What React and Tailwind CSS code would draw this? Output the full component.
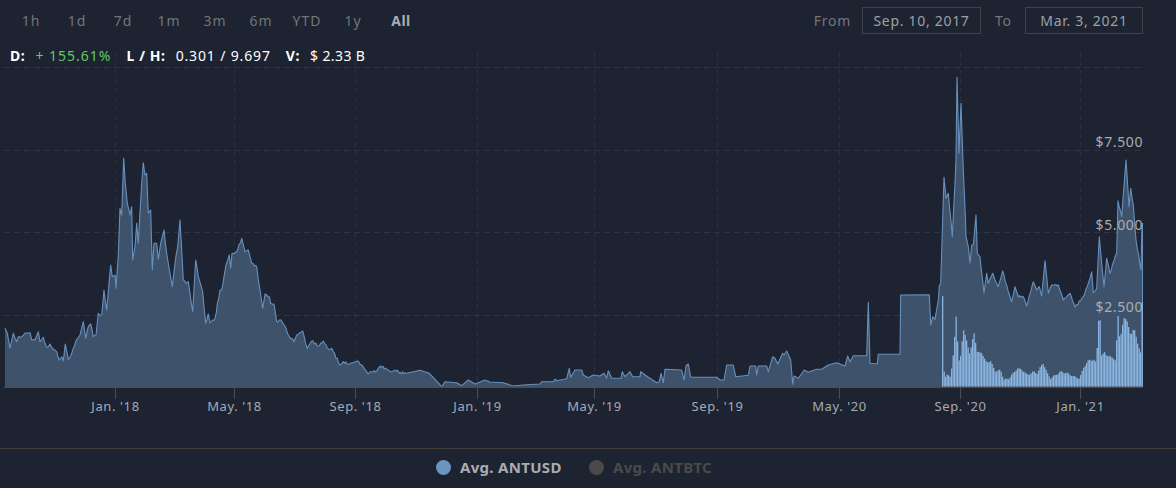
const font = { fontFamily: '"Noto Sans", sans-serif' };

const ranges = ['1h', '1d', '7d', '1m', '3m', '6m', 'YTD', '1y', 'All'];

const ticks = [
  [115, "Jan. '18"],
  [234, "May. '18"],
  [355, "Sep. '18"],
  [477, "Jan. '19"],
  [594, "May. '19"],
  [717, "Sep. '19"],
  [839, "May. '20"],
  [960, "Sep. '20"],
  [1080, "Jan. '21"],
];

// traced from crops of the chart, 3x scale, each with its own origin
const left = [15,565,22,580,30,625,40,580,50,605,55,590,65,590,75,580,90,578,95,600,105,600,115,575,120,605,130,592,140,622,150,612,160,628,170,635,178,660,185,650,190,662,196,612,205,658,215,640,230,598,240,585,250,545,257,595,263,565,272,552,280,590,288,585,295,520,305,525,312,450,320,510,332,375,337,410,345,405,348,445,355,345,360,205,365,225,371,55,376,130,382,190,390,225,395,200,398,360,405,320,410,250,415,310,425,130,430,68,435,105,440,100,445,220,452,210,457,390,462,310,470,310,475,358,482,310,492,270,500,340,510,400,517,440,525,370,533,320,540,240,550,420,558,430,565,425,570,460,578,515,587,360,595,410,608,455,617,550,625,522,630,548,645,535,660,450,665,450,678,375,688,345,692,385,696,340,710,335,725,295,735,335,745,330,755,370,770,380,780,450,788,505,795,462,808,470,812,490,822,492,830,545,843,540,858,565,868,590,882,605,890,585,908,573,922,625,935,603,955,618,970,603,985,627,995,625,1020,675,1030,665,1045,672,1075,663,1085,675,1105,702,1115,695,1130,693,1140,678,1165,690,1175,695,1185,690,1200,697];
const middle = [0,245,20,250,60,241,88,250,105,268,125,290,135,275,170,278,185,287,205,270,225,282,255,270,270,276,310,278,340,288,370,285,420,282,425,275,460,275,465,267,470,272,500,266,508,235,512,262,525,240,545,240,550,255,565,263,580,255,600,258,612,250,620,264,625,242,635,265,663,265,667,245,675,260,690,245,698,260,720,260,722,245,745,262,770,278,778,275,783,250,790,278,795,238,845,240,852,270,858,228,865,222,872,262,950,262,960,270,972,270,980,225,1000,225,1007,260,1045,256,1050,228,1067,228,1070,255,1075,228,1100,228,1105,245,1118,200,1125,205,1133,222,1148,190,1152,195,1160,183,1172,210,1178,283,1182,258,1195,265,1213,240,1225,247,1250,238,1265,238,1285,225,1310,218,1335,228,1343,198,1350,215,1360,197,1400,197,1405,37,1410,220,1432,222,1435,193,1500,192];
const right = [0,853,60,853,62,675,148,674,152,765,158,740,165,748,175,690,178,648,182,640,192,322,198,385,205,370,217,500,228,270,231,22,237,250,243,100,250,300,256,435,258,500,265,530,270,580,275,525,280,525,288,435,292,550,300,560,312,670,320,610,325,640,338,610,345,630,355,650,368,603,385,665,395,695,405,650,415,680,430,680,440,708,460,635,470,660,478,650,485,678,495,572,505,670,515,645,535,645,550,690,570,670,585,712,610,680,625,640,635,605,640,668,650,655,658,500,665,580,672,650,680,565,690,610,705,560,710,550,714,392,725,440,738,270,747,410,752,355,760,405,768,510,783,600,786,460];
const bars = [187,865,192,925,200,910,210,925,218,850,228,722,233,880,240,855,248,780,258,810,268,855,280,785,290,850,302,845,315,875,330,875,345,905,360,900,370,930,385,925,410,895,425,900,440,915,460,905,470,910,487,878,500,910,510,925,540,905,560,910,580,920,597,925,610,890,625,870,640,870,647,880,654,750,660,750,662,860,672,845,680,860,695,860,705,875,712,730,718,810,730,745,738,745,750,800,760,770,770,820,780,845,785,680];

function toScreen(list, ox, oy) {
  const out = [];
  for (let i = 0; i < list.length; i += 2) {
    out.push([ox + list[i] / 3, oy + list[i + 1] / 3]);
  }
  return out;
}

const traced = [
  ...toScreen(left, 0, 140),
  ...toScreen(middle, 400, 290).filter((p) => p[0] > 400),
  ...toScreen(right, 880, 70).filter((p) => p[0] > 880),
];

// the real series is daily, so the traced segments get a little wobble
const linePts = [];
traced.forEach((p, i) => {
  linePts.push(p);
  const next = traced[i + 1];
  if (!next || (p[0] > 400 && p[0] < 945)) return;
  const steps = Math.floor((next[0] - p[0]) / 1.2);
  for (let s = 1; s < steps; s++) {
    const t = s / steps;
    const x = p[0] + t * (next[0] - p[0]);
    const y = p[1] + t * (next[1] - p[1]);
    linePts.push([x, y + Math.sin(x * 7.3) * 0.9 + Math.sin(x * 2.1) * 0.5]);
  }
});

const lineStr = linePts.map((p) => p[0].toFixed(1) + ',' + p[1].toFixed(1)).join(' ');
const areaStr = `5,387 ${lineStr} 1142,387`;

const barPts = toScreen(bars, 880, 70);
const barRects = [];
for (let x = 942; x < 1142; x += 1.5) {
  let top = barPts[barPts.length - 1][1];
  for (let i = 0; i < barPts.length - 1; i++) {
    if (x >= barPts[i][0] && x < barPts[i + 1][0]) {
      const t = (x - barPts[i][0]) / (barPts[i + 1][0] - barPts[i][0]);
      top = barPts[i][1] + t * (barPts[i + 1][1] - barPts[i][1]);
      break;
    }
  }
  barRects.push({ x, top: top + Math.sin(x * 5.1) * 0.8 });
}

function Chart() {
  return (
    <svg viewBox="0 44 1176 404" className="block w-full h-[404px]" style={font}>
      {ticks.map(([x]) => (
        <line key={x} x1={x + 0.5} x2={x + 0.5} y1="52" y2="387" stroke="#2a303d" strokeDasharray="5 4" />
      ))}
      {[67.5, 150.5, 232.5, 315.5].map((y) => (
        <line key={y} x1="4" x2="1143" y1={y} y2={y} stroke="#2e3441" strokeDasharray="6 4" />
      ))}
      <polygon points={areaStr} fill="#3f526b" />
      <polyline points={lineStr} fill="none" stroke="#6690bd" strokeWidth="1.1" strokeLinejoin="round" />
      <line x1="1142.5" x2="1142.5" y1="223" y2="387" stroke="#6690bd" strokeWidth="1" />
      {barRects.map((b) => (
        <rect key={b.x} x={b.x} y={b.top} width="1.3" height={387 - b.top} fill="#8ab4e0" />
      ))}
      <rect x="4" y="386.5" width="1139" height="1.5" fill="#4a4c53" />
      {ticks.map(([x, label]) => (
        <g key={label}>
          <line x1={x + 0.5} x2={x + 0.5} y1="387" y2="399" stroke="#4a4c53" />
          <text x={x + 0.5} y="411" textAnchor="middle" fontSize="13" letterSpacing="0.6" fill="#a3abb7">
            {label}
          </text>
        </g>
      ))}
      {[['$7.500', 147], ['$5.000', 230], ['$2.500', 312]].map(([label, y]) => (
        <text key={label} x="1143" y={y} textAnchor="end" fontSize="14" letterSpacing="0.6" fill="#a9adb3">
          {label}
        </text>
      ))}
    </svg>
  );
}

export default function App() {
  return (
    <div className="relative w-[1176px] h-[488px] overflow-hidden bg-[#1d2331]" style={font}>
      <div className="flex items-center justify-between h-[44px] pb-[3px] pl-2 pr-[33px]">
        <div className="flex">
          {ranges.map((r) => (
            <button
              key={r}
              className={`w-[46px] text-sm text-center ${
                r === 'All' ? 'font-bold text-[#a9adb3] tracking-[0.5px] pl-[4px]' : 'tracking-[1px] text-[#72757c]'
              }`}
            >
              {r}
            </button>
          ))}
        </div>
        <div className="flex items-center text-sm tracking-[0.7px]">
          <span className="text-[#72757c] mr-[11px]">From</span>
          <div className="w-[119px] h-[27px] border border-[#40434a] flex items-center justify-center text-[#9aa1ab]">
            Sep. 10, 2017
          </div>
          <span className="text-[#72757c] ml-[14px] mr-[11px] w-[19px]">To</span>
          <div className="w-[118px] h-[27px] border border-[#40434a] flex items-center justify-center text-[#9aa1ab]">
            Mar. 3, 2021
          </div>
        </div>
      </div>

      <div className="absolute top-[46px] left-[10px] flex text-sm tracking-[0.6px] text-white leading-[20px]">
        <b className="mr-[10px]">D:</b>
        <span className="text-[#5ccd5c] tracking-[1px] mr-[15px]">+ 155.61%</span>
        <b className="mr-[10px]">L / H:</b>
        <span className="tracking-[0.85px] mr-[15px]">0.301 / 9.697</span>
        <b className="mr-[10px]">V:</b>
        <span className="tracking-[0.4px]">$ 2.33 B</span>
      </div>

      <Chart />

      <div className="flex items-center h-[40px] border-t border-[#433f3f] pl-[436px] pb-[2px] text-[15px] font-bold tracking-[0.3px]">
        <span className="w-[15px] h-[15px] rounded-full bg-[#6a94c2] mr-[9px]" />
        <span className="text-[#a9adb3] w-[129px]">Avg. ANTUSD</span>
        <span className="w-[15px] h-[15px] rounded-full bg-[#4a4a4a] mr-[9px]" />
        <span className="text-[#4a4a4a]">Avg. ANTBTC</span>
      </div>
    </div>
  );
}
